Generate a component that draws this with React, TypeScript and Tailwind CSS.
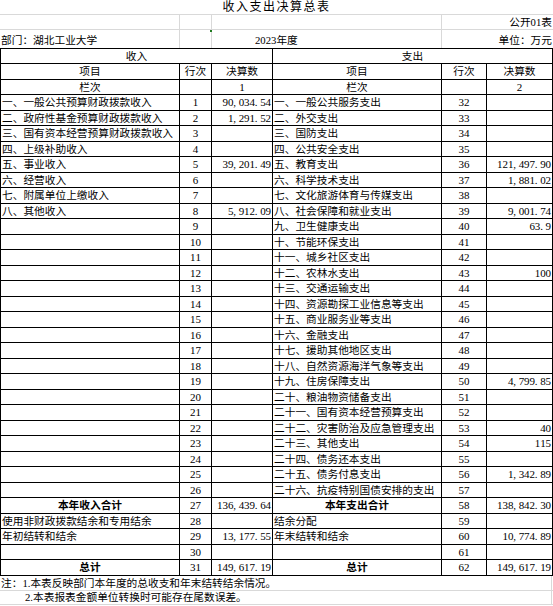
import React from "react";

type Item = { name: string; no: string; val?: string; center?: boolean; bold?: boolean };

const left: Item[] = [
  { name: "一、一般公共预算财政拨款收入", no: "1", val: "90,034.54" },
  { name: "二、政府性基金预算财政拨款收入", no: "2", val: "1,291.52" },
  { name: "三、国有资本经营预算财政拨款收入", no: "3" },
  { name: "四、上级补助收入", no: "4" },
  { name: "五、事业收入", no: "5", val: "39,201.49" },
  { name: "六、经营收入", no: "6" },
  { name: "七、附属单位上缴收入", no: "7" },
  { name: "八、其他收入", no: "8", val: "5,912.09" },
  ...Array.from({ length: 18 }, (_, i) => ({ name: "", no: String(9 + i) })),
  { name: "本年收入合计", no: "27", val: "136,439.64", center: true, bold: true },
  { name: "使用非财政拨款结余和专用结余", no: "28" },
  { name: "年初结转和结余", no: "29", val: "13,177.55" },
  { name: "", no: "30" },
  { name: "总计", no: "31", val: "149,617.19", center: true, bold: true },
];

const right: Item[] = [
  { name: "一、一般公共服务支出", no: "32" },
  { name: "二、外交支出", no: "33" },
  { name: "三、国防支出", no: "34" },
  { name: "四、公共安全支出", no: "35" },
  { name: "五、教育支出", no: "36", val: "121,497.90" },
  { name: "六、科学技术支出", no: "37", val: "1,881.02" },
  { name: "七、文化旅游体育与传媒支出", no: "38" },
  { name: "八、社会保障和就业支出", no: "39", val: "9,001.74" },
  { name: "九、卫生健康支出", no: "40", val: "63.9" },
  { name: "十、节能环保支出", no: "41" },
  { name: "十一、城乡社区支出", no: "42" },
  { name: "十二、农林水支出", no: "43", val: "100" },
  { name: "十三、交通运输支出", no: "44" },
  { name: "十四、资源勘探工业信息等支出", no: "45" },
  { name: "十五、商业服务业等支出", no: "46" },
  { name: "十六、金融支出", no: "47" },
  { name: "十七、援助其他地区支出", no: "48" },
  { name: "十八、自然资源海洋气象等支出", no: "49" },
  { name: "十九、住房保障支出", no: "50", val: "4,799.85" },
  { name: "二十、粮油物资储备支出", no: "51" },
  { name: "二十一、国有资本经营预算支出", no: "52" },
  { name: "二十二、灾害防治及应急管理支出", no: "53", val: "40" },
  { name: "二十三、其他支出", no: "54", val: "115" },
  { name: "二十四、债务还本支出", no: "55" },
  { name: "二十五、债务付息支出", no: "56", val: "1,342.89" },
  { name: "二十六、抗疫特别国债安排的支出", no: "57" },
  { name: "本年支出合计", no: "58", val: "138,842.30", center: true, bold: true },
  { name: "结余分配", no: "59" },
  { name: "年末结转和结余", no: "60", val: "10,774.89" },
  { name: "", no: "61" },
  { name: "总计", no: "62", val: "149,617.19", center: true, bold: true },
];

function Num({ v }: { v: string }) {
  return (
    <span className="flex text-[11px]">
      {v.split("").map((c, i) => (
        <span
          key={i}
          className={
            c === "," || c === "."
              ? "inline-block w-[5.4px] text-left"
              : "inline-block w-[5.4px] text-center"
          }
        >
          {c}
        </span>
      ))}
    </span>
  );
}

const cell = "shrink-0 h-full border-r border-black flex items-center overflow-hidden whitespace-nowrap";

function NameCell({ it, w }: { it: Item; w: string }) {
  return (
    <div
      className={`${cell} ${w} ${it.center ? "justify-center" : "justify-start pl-[1px]"} ${
        it.bold ? "font-bold" : ""
      }`}
    >
      {it.name}
    </div>
  );
}

function NoCell({ v, w }: { v: string; w: string }) {
  return (
    <div className={`${cell} ${w} justify-center`}>
      <Num v={v} />
    </div>
  );
}

function ValCell({ v, w }: { v?: string; w: string }) {
  return (
    <div className={`${cell} ${w} justify-end pr-[1px]`}>{v ? <Num v={v} /> : null}</div>
  );
}

export default function App() {
  const rowH = (k: number) => (k === 0 ? "h-[15px]" : k % 2 === 1 ? "h-[16px]" : "h-[15px]");
  const font = { fontFamily: '"Liberation Serif", "Noto Sans CJK SC", serif' };
  return (
    <div className="w-[553px] h-[606px] bg-white text-black text-[10.7px] leading-none" style={font}>
      {/* title */}
      <div className="h-[15px] border-b border-[#d9d9d9] flex items-center justify-center text-[12px] tracking-[1.5px]">
        收入支出决算总表
      </div>
      <div className="h-[15px] border-b border-[#d9d9d9] flex">
        <div className="w-[180px] h-full border-r border-[#d9d9d9]" />
        <div className="w-[32px] h-full border-r border-[#d9d9d9]" />
        <div className="w-[230px] h-full border-r border-[#d9d9d9]" />
        <div className="flex-1 h-full flex items-center justify-end pr-[1px]">公开01表</div>
      </div>
      <div className="h-[18px] flex relative">
        <div className="w-[180px] h-full border-r border-[#d9d9d9] flex items-end pb-[2px] pl-[1px]">
          部门：湖北工业大学
        </div>
        <div className="w-[32px] h-full border-r border-[#d9d9d9]" />
        <div className="w-[230px] h-full border-r border-[#d9d9d9] flex items-end pb-[2px]">
          <span className="ml-[43px]">2023年度</span>
        </div>
        <div className="flex-1 h-full flex items-end justify-end pb-[2px] pr-[1px]">单位：万元</div>
        <span className="absolute left-[210px] top-0 w-[2px] h-[2px] bg-[#1f7a1f]" />
      </div>

      {/* table */}
      <div className="w-[553px] border-t border-l border-black">
        <div className={`flex border-b border-black ${rowH(0)}`}>
          <div className={`${cell} w-[272px] justify-center`}>收入</div>
          <div className={`${cell} w-[280px] justify-center`}>支出</div>
        </div>
        <div className={`flex border-b border-black ${rowH(1)}`}>
          <div className={`${cell} w-[179px] justify-center`}>项目</div>
          <div className={`${cell} w-[32px] justify-center`}>行次</div>
          <div className={`${cell} w-[61px] justify-center`}>决算数</div>
          <div className={`${cell} w-[169px] justify-center`}>项目</div>
          <div className={`${cell} w-[45px] justify-center`}>行次</div>
          <div className={`${cell} w-[66px] justify-center`}>决算数</div>
        </div>
        <div className={`flex border-b border-black ${rowH(2)}`}>
          <div className={`${cell} w-[179px] justify-center`}>栏次</div>
          <div className={`${cell} w-[32px]`} />
          <div className={`${cell} w-[61px] justify-center`}>
            <Num v="1" />
          </div>
          <div className={`${cell} w-[169px] justify-center`}>栏次</div>
          <div className={`${cell} w-[45px]`} />
          <div className={`${cell} w-[66px] justify-center`}>
            <Num v="2" />
          </div>
        </div>
        {left.map((l, i) => {
          const r = right[i];
          return (
            <div key={i} className={`flex border-b border-black ${rowH(i + 3)}`}>
              <NameCell it={l} w="w-[179px]" />
              <NoCell v={l.no} w="w-[32px]" />
              <ValCell v={l.val} w="w-[61px]" />
              <NameCell it={r} w="w-[169px]" />
              <NoCell v={r.no} w="w-[45px]" />
              <ValCell v={r.val} w="w-[66px]" />
            </div>
          );
        })}
      </div>

      {/* notes */}
      <div className="h-[15px] border-b border-[#d9d9d9] flex">
        <div className="w-[552px] h-full border-r border-[#d9d9d9] flex items-center pl-[1px] whitespace-nowrap">
          注：1.本表反映部门本年度的总收支和年末结转结余情况。
        </div>
      </div>
      <div className="h-[14px] border-b border-[#d9d9d9] flex">
        <div className="w-[552px] h-full border-r border-[#d9d9d9] flex items-center pl-[25px] whitespace-nowrap">
          2.本表报表金额单位转换时可能存在尾数误差。
        </div>
      </div>
    </div>
  );
}
